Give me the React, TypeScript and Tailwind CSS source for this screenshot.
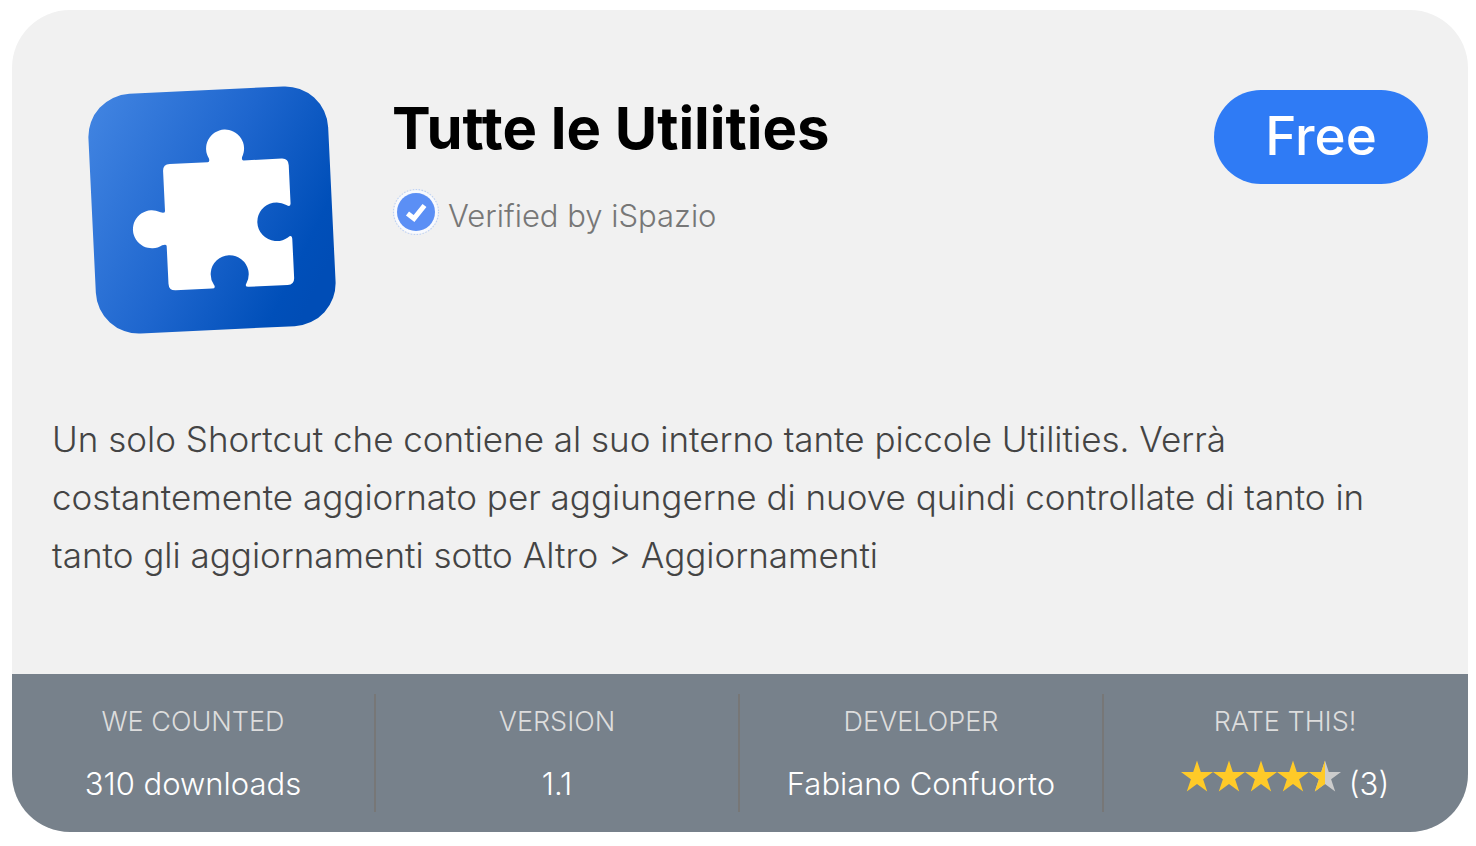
import type { ReactNode } from "react";

function AppIcon() {
  return (
    <svg viewBox="88 86 248 248" className="size-62 shrink-0" role="img" aria-label="Puzzle piece">
      <defs>
        <linearGradient id="tile" x1="0" y1="0.15" x2="1" y2="0.7">
          <stop offset="0" stopColor="#3f82e0" />
          <stop offset="0.5" stopColor="#1e66ce" />
          <stop offset="0.9" stopColor="#004fb9" />
          <stop offset="1" stopColor="#004db6" />
        </linearGradient>
      </defs>
      <g transform="rotate(-2.75 212 210)">
        <rect x="92" y="90" width="240" height="240" rx="43" fill="url(#tile)" />
        <path
          fill="#fff"
          d="M172 162H210Q212.300 162 211.400 158.500A19 19 0 1 1 244.600 158.500Q243.700 162 246 162H284Q290.800 162 290.800 169V207Q290.800 211.500 286.500 208.600A19.300 19.300 0 1 0 286.500 241Q290.800 238 290.800 242.500V281.500Q290.800 288.500 284 288.500H245Q240.500 288.500 243 284.600A19 19 0 1 0 210.200 284.600Q212.700 288.500 208.200 288.500H172Q165 288.500 165 281.500V244Q165 241.700 160.500 242.900A19 19 0 1 1 160.500 209.900Q165 211.100 165 208.800V169Q165 162 172 162Z"
        />
      </g>
    </svg>
  );
}

function VerifiedBadge() {
  return (
    <svg viewBox="0 0 48 48" className="size-12 shrink-0" aria-hidden="true">
      <circle cx="24" cy="24" r="22.500" fill="none" stroke="#bdd1f5" strokeWidth="1.200" strokeDasharray="1.500 1.500" />
      <circle cx="24" cy="24" r="20.500" fill="none" stroke="#f8faff" strokeWidth="2.500" />
      <circle cx="24" cy="24" r="19" fill="#5b8ff5" />
      <path d="M15.500 25.500L22 30.500L32.500 17.500" fill="none" stroke="#fff" strokeWidth="5" />
    </svg>
  );
}

const STAR = "M16 0L19.800 11.600H32L22.100 18.800L26.200 31L16 23.600L5.800 31L9.900 18.800L0 11.600H12.200Z";

function Star({ half = false }: { half?: boolean }) {
  return (
    <svg viewBox="0 0 32 31" className="h-8 w-8" aria-hidden="true">
      <path d={STAR} fill={half ? "#cccccc" : "#ffca28"} />
      {half && <path d="M16 0V23.600L5.800 31L9.900 18.800L0 11.600H12.200Z" fill="#ffca28" />}
    </svg>
  );
}

function Stat({ label, children }: { label: string; children: ReactNode }) {
  return (
    <div className="flex flex-col items-center gap-4.5 border-r-2 border-[#777777] pt-2 pb-1 last:border-transparent">
      <dt className="text-[27px] leading-10 text-[#dddddd]">{label}</dt>
      <dd className="flex items-start text-[31px] leading-12 text-white">{children}</dd>
    </div>
  );
}

export default function App() {
  return (
    <main className="bg-white pt-2.5 pr-2 pb-3.5 pl-3 font-['Inter',sans-serif] font-light">
      <article className="overflow-hidden rounded-[58px] bg-[#f1f1f1]">
        <header className="flex items-start pt-19 pr-10 pl-19">
          <AppIcon />
          <div className="ml-14 grow pt-2">
            <h1 className="text-[58px] leading-17 font-bold text-black">Tutte le Utilities</h1>
            <p className="mt-6.5 flex items-start gap-2 text-[31px] leading-14 text-[#777777]">
              <VerifiedBadge />
              Verified by iSpazio
            </p>
          </div>
          <button type="button" className="mt-1 h-23.5 w-53.5 rounded-full bg-[#2f7bf5] text-[53px] font-medium text-white">
            Free
          </button>
        </header>
        <p className="mt-19 px-10 pb-22.5 text-[35px] leading-[58px] text-[#444444]">
          Un solo Shortcut che contiene al suo interno tante piccole Utilities. Verrà costantemente aggiornato per
          aggiungerne di nuove quindi controllate di tanto in tanto gli aggiornamenti sotto Altro &gt; Aggiornamenti
        </p>
        <dl className="grid grid-cols-4 bg-[#77818b] py-5">
          <Stat label="WE COUNTED">310 downloads</Stat>
          <Stat label="VERSION">1.1</Stat>
          <Stat label="DEVELOPER">Fabiano Confuorto</Stat>
          <Stat label="RATE THIS!">
            <span role="img" aria-label="4.5 stars" className="mr-2 flex">
              <Star />
              <Star />
              <Star />
              <Star />
              <Star half />
            </span>
            (3)
          </Stat>
        </dl>
      </article>
    </main>
  );
}
